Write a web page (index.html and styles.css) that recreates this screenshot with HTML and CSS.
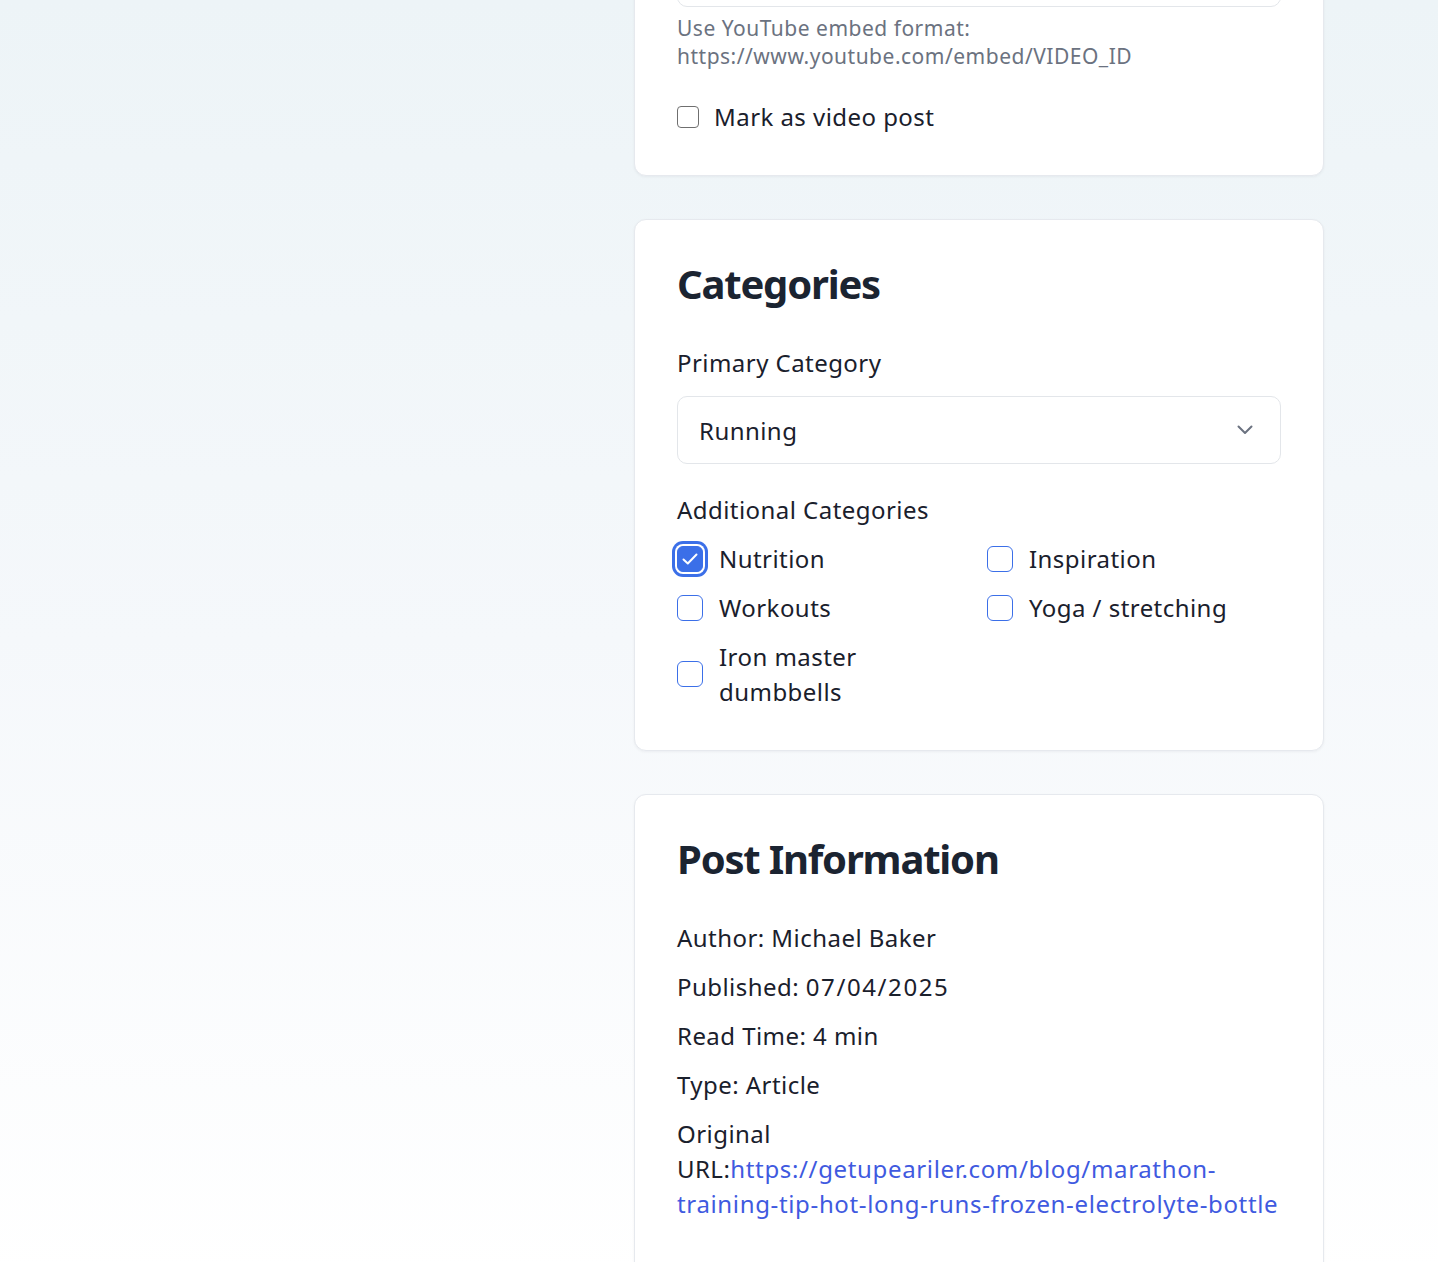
FILE: index.html
```html
<!DOCTYPE html>
<html lang="en">
<head>
<meta charset="utf-8">
<title>Edit Post</title>
<link rel="stylesheet" href="styles.css">
</head>
<body>
<div class="layout">
  <div class="main-col"></div>
  <aside class="sidebar">
    <section class="card card-video">
      <label class="field-label" for="video-url">Video URL</label>
      <input class="text-input" id="video-url" type="text" value="">
      <p class="help">Use YouTube embed format:<br>https://www.youtube.com/embed/VIDEO_ID</p>
      <label class="plain-check">
        <span class="plain-box"></span>
        <span>Mark as video post</span>
      </label>
    </section>

    <section class="card">
      <h2 class="card-title">Categories</h2>
      <div class="field-label">Primary Category</div>
      <div class="select">
        <span>Running</span>
        <svg class="chevron" width="16" height="10" viewBox="0 0 16 10" aria-hidden="true"><path d="M1.5 1.5 L8 8 L14.5 1.5" fill="none" stroke="#6b7280" stroke-width="2" stroke-linecap="round" stroke-linejoin="round"/></svg>
      </div>
      <div class="field-label sub">Additional Categories</div>
      <div class="check-grid">
        <label class="cat">
          <span class="box checked"><svg width="18" height="14" viewBox="0 0 18 14" aria-hidden="true"><path d="M2.5 7.5 L6.8 11.5 L15.5 2.5" fill="none" stroke="#fff" stroke-width="2" stroke-linecap="round" stroke-linejoin="round"/></svg></span>
          <span class="cat-text">Nutrition</span>
        </label>
        <label class="cat">
          <span class="box"></span>
          <span class="cat-text">Inspiration</span>
        </label>
        <label class="cat">
          <span class="box"></span>
          <span class="cat-text">Workouts</span>
        </label>
        <label class="cat">
          <span class="box"></span>
          <span class="cat-text">Yoga / stretching</span>
        </label>
        <label class="cat">
          <span class="box"></span>
          <span class="cat-text">Iron master dumbbells</span>
        </label>
      </div>
    </section>

    <section class="card card-info">
      <h2 class="card-title">Post Information</h2>
      <ul class="info">
        <li>Author: Michael Baker</li>
        <li>Published: <span class="num">07/04/2025</span></li>
        <li>Read Time: 4 min</li>
        <li>Type: Article</li>
        <li class="url">Original URL:<a href="#">https://getupeariler.com/blog/marathon-training-tip-hot-long-runs-frozen-electrolyte-bottle</a></li>
      </ul>
    </section>
  </aside>
</div>
</body>
</html>
```

FILE: styles.css
```css
* { box-sizing: border-box; }

html, body {
  margin: 0;
  padding: 0;
}

body {
  font-family: "Noto Sans", "Open Sans", sans-serif;
  color: #1a202c;
  background: linear-gradient(180deg, #edf4f7 0%, #f5f8fb 50%, #ffffff 100%);
  min-height: 1262px;
  overflow: hidden;
  letter-spacing: 0.45px;
}

.layout {
  display: grid;
  grid-template-columns: 1fr 690px;
  column-gap: 40px;
  width: 1324px;
}

.sidebar {
  display: flex;
  flex-direction: column;
  gap: 43px;
  margin-top: -154px;
}

.card {
  background: #fff;
  border: 1px solid #e6e9ee;
  border-radius: 12px;
  box-shadow: 0 1px 3px rgba(15, 23, 42, 0.05);
  padding: 40px 42px 41px;
}

.card-info {
  padding-bottom: 56px;
}

.card-title {
  margin: 0 0 37px;
  font-size: 40px;
  line-height: 48px;
  font-weight: 700;
  letter-spacing: -1.2px;
  color: #1b2431;
}

.field-label {
  display: block;
  font-size: 24px;
  line-height: 35px;
  margin-bottom: 16px;
}

.card-video .field-label {
  margin-top: 1px;
}

.field-label.sub {
  margin-top: 28px;
  margin-bottom: 14px;
}

.text-input {
  display: block;
  width: 100%;
  height: 68px;
  border: 1px solid #e3e6ea;
  border-radius: 10px;
  font: inherit;
}

.help {
  margin: 7px 0 0;
  font-size: 21px;
  line-height: 28px;
  letter-spacing: 0.5px;
  color: #6b7280;
}

.plain-check {
  display: flex;
  align-items: center;
  gap: 15px;
  margin-top: 29px;
  font-size: 24px;
  line-height: 35px;
}

.plain-box {
  width: 22px;
  height: 22px;
  border: 1.5px solid #6f6f6f;
  border-radius: 4px;
  flex: none;
}

.select {
  display: flex;
  align-items: center;
  justify-content: space-between;
  height: 68px;
  border: 1px solid #e3e6ea;
  border-radius: 10px;
  padding: 0 27px 0 21px;
  font-size: 24px;
}

.check-grid {
  display: grid;
  grid-template-columns: 1fr 1fr;
  column-gap: 16px;
  row-gap: 14px;
}

.cat {
  display: flex;
  align-items: center;
  gap: 16px;
  font-size: 24px;
  line-height: 35px;
}

.box {
  width: 26px;
  height: 26px;
  flex: none;
  border: 1.5px solid #3b6fe8;
  border-radius: 6px;
  display: flex;
  align-items: center;
  justify-content: center;
}

.box.checked {
  background: #3b6fe8;
  box-shadow: 0 0 0 2px #fff, 0 0 0 5px #3b6fe8;
}

.info {
  list-style: none;
  margin: 0;
  padding: 0;
  display: flex;
  flex-direction: column;
  gap: 14px;
  font-size: 24px;
  line-height: 35px;
}

.info .num {
  letter-spacing: 1.6px;
}

.info a {
  color: #3f5ae0;
  text-decoration: none;
  letter-spacing: 0.65px;
}
```
